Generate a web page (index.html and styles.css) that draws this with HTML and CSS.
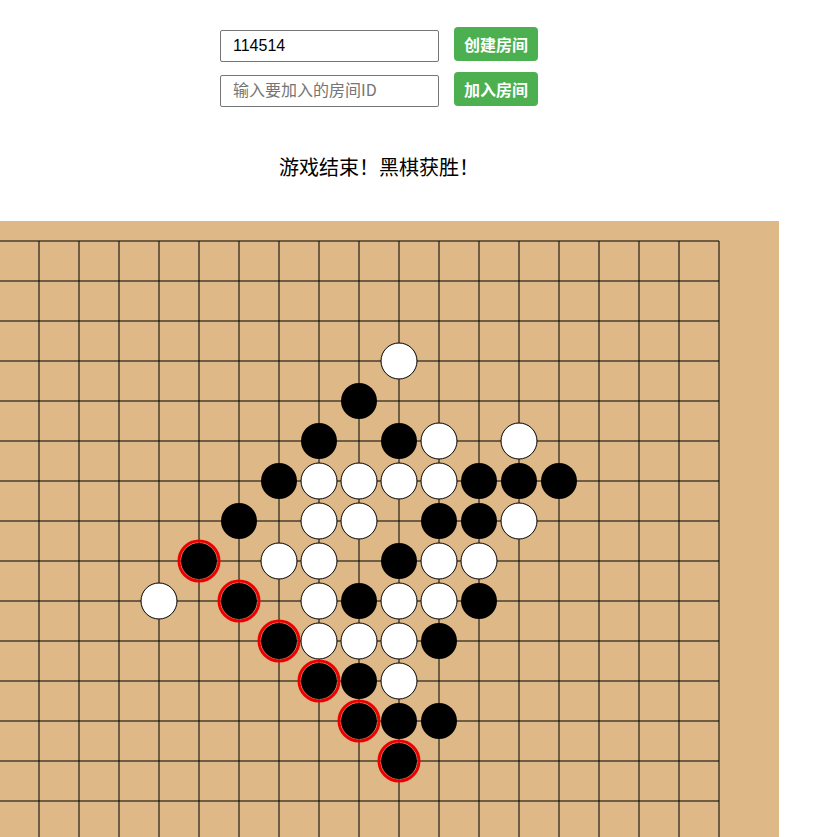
FILE: index.html
```html
<!DOCTYPE html>
<html lang="zh">
<head>
<meta charset="utf-8">
<title>五子棋</title>
<link rel="stylesheet" href="styles.css">
</head>
<body>
<div class="page">
  <div class="controls">
    <div class="row">
      <input class="field" type="text" value="114514">
      <button class="btn">创建房间</button>
    </div>
    <div class="row">
      <input class="field" type="text" placeholder="输入要加入的房间ID">
      <button class="btn">加入房间</button>
    </div>
  </div>
  <div class="status">游戏结束！黑棋获胜！</div>
  <svg class="board" width="800" height="800" viewBox="0 0 800 800" xmlns="http://www.w3.org/2000/svg">
    <rect x="0" y="0" width="800" height="800" fill="#DEB887"/>
    <g id="grid" stroke="#000" stroke-width="1"></g>
    <g id="stones"></g>
  </svg>
</div>
<script src="board.js"></script>
</body>
</html>
```

FILE: styles.css
```css
html, body {
  margin: 0;
  padding: 0;
  background: #fff;
}
body {
  font-family: "Liberation Sans", Arial, "Noto Sans CJK SC", sans-serif;
  overflow: hidden;
}
.page {
  width: 800px;
  margin-left: -21px;
  display: flex;
  flex-direction: column;
  align-items: center;
  padding-top: 27px;
}
.controls {
  display: flex;
  flex-direction: column;
  gap: 11px;
}
.row {
  display: flex;
  align-items: center;
  gap: 15px;
}
.field {
  box-sizing: border-box;
  width: 219px;
  height: 32px;
  margin-top: 3px;
  margin-bottom: -1px;
  padding: 0 12px;
  border: 1px solid #767676;
  border-radius: 2px;
  font-family: "Liberation Sans", Arial, "Noto Sans CJK SC", sans-serif;
  font-size: 16px;
  color: #000;
  outline: none;
}
.field::placeholder {
  color: #757575;
  font-family: "Noto Sans CJK SC", sans-serif;
}
.btn {
  box-sizing: border-box;
  height: 34px;
  padding: 0 10px;
  border: none;
  border-radius: 4px;
  background: #4CAF50;
  color: #fff;
  font-family: "Noto Sans CJK SC", sans-serif;
  font-size: 16px;
  font-weight: bold;
  cursor: pointer;
}
.status {
  margin-top: 47px;
  height: 28px;
  line-height: 28px;
  font-family: "Noto Sans CJK SC", sans-serif;
  font-size: 20px;
  font-weight: normal;
  color: #000;
}
.board {
  display: block;
  margin-top: 40px;
  flex-shrink: 0;
}
```

FILE: board.js
```js
(function () {
  var NS = "http://www.w3.org/2000/svg";
  var grid = document.getElementById("grid");
  for (var k = 0; k < 19; k++) {
    var p = 20 + 40 * k;
    var h = document.createElementNS(NS, "line");
    h.setAttribute("x1", 20); h.setAttribute("x2", 740);
    h.setAttribute("y1", p); h.setAttribute("y2", p);
    grid.appendChild(h);
    var v = document.createElementNS(NS, "line");
    v.setAttribute("y1", 20); v.setAttribute("y2", 740);
    v.setAttribute("x1", p); v.setAttribute("x2", p);
    grid.appendChild(v);
  }
  // [col, row, type] type: 1 black, 2 white, 3 winning black
  var stones = [
    [9,3,2],
    [8,4,1],
    [7,5,1],[9,5,1],[10,5,2],[12,5,2],
    [6,6,1],[7,6,2],[8,6,2],[9,6,2],[10,6,2],[11,6,1],[12,6,1],[13,6,1],
    [5,7,1],[7,7,2],[8,7,2],[10,7,1],[11,7,1],[12,7,2],
    [4,8,3],[6,8,2],[7,8,2],[9,8,1],[10,8,2],[11,8,2],
    [3,9,2],[5,9,3],[7,9,2],[8,9,1],[9,9,2],[10,9,2],[11,9,1],
    [6,10,3],[7,10,2],[8,10,2],[9,10,2],[10,10,1],
    [7,11,3],[8,11,1],[9,11,2],
    [8,12,3],[9,12,1],[10,12,1],
    [9,13,3]
  ];
  var g = document.getElementById("stones");
  stones.forEach(function (s) {
    var cx = 60 + 40 * s[0], cy = 20 + 40 * s[1];
    var c = document.createElementNS(NS, "circle");
    c.setAttribute("cx", cx); c.setAttribute("cy", cy); c.setAttribute("r", 18);
    if (s[2] === 2) {
      c.setAttribute("fill", "#fff");
      c.setAttribute("stroke", "#000");
      c.setAttribute("stroke-width", 1);
    } else {
      c.setAttribute("fill", "#000");
    }
    g.appendChild(c);
    if (s[2] === 3) {
      var r = document.createElementNS(NS, "circle");
      r.setAttribute("cx", cx); r.setAttribute("cy", cy); r.setAttribute("r", 20);
      r.setAttribute("fill", "none");
      r.setAttribute("stroke", "#e00");
      r.setAttribute("stroke-width", 3);
      g.appendChild(r);
    }
  });
})();
```
